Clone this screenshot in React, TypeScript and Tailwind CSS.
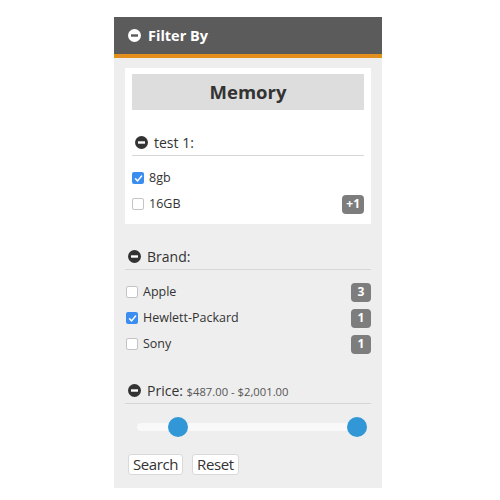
import React from "react";

const font = { fontFamily: '"Open Sans", "Noto Sans", sans-serif' };

function MinusIcon({ dark = true }: { dark?: boolean }) {
  return (
    <svg width="13" height="13" viewBox="0 0 13 13" className="shrink-0">
      <circle cx="6.5" cy="6.5" r="6.5" fill={dark ? "#333333" : "#ffffff"} />
      <rect x="3" y="5.3" width="7" height="2.4" fill={dark ? "#ffffff" : "#5a5a5a"} />
    </svg>
  );
}

function Checkbox({ checked }: { checked?: boolean }) {
  if (checked) {
    return (
      <div className="w-[12px] h-[12px] rounded-[2px] bg-[#3b8ef0] flex items-center justify-center shrink-0">
        <svg width="9" height="9" viewBox="0 0 9 9">
          <path d="M1.5 4.8 L3.6 6.9 L7.6 2" stroke="#fff" strokeWidth="1.5" fill="none" strokeLinecap="round" strokeLinejoin="round" />
        </svg>
      </div>
    );
  }
  return <div className="w-[12px] h-[12px] rounded-[2px] bg-white border border-[#c4c4c4] shrink-0" />;
}

function Badge({ text }: { text: string }) {
  return (
    <div className="h-[19px] min-w-[20px] px-[4px] rounded-[4px] bg-[#7d7d7d] text-white text-[12px] font-bold flex items-center justify-center leading-none">
      {text}
    </div>
  );
}

function Row({ label, checked, badge }: { label: string; checked?: boolean; badge?: string }) {
  return (
    <div className="h-[26px] flex items-center justify-between">
      <div className="flex items-center gap-[5px]">
        <Checkbox checked={checked} />
        <span className="text-[12.5px] text-[#333]">{label}</span>
      </div>
      {badge && <Badge text={badge} />}
    </div>
  );
}

function SectionHeader({ children }: { children: React.ReactNode }) {
  return (
    <div className="h-[27px] flex items-center gap-[6px] pl-[3px] border-b border-[#d6d6d6]">
      <MinusIcon />
      {children}
    </div>
  );
}

export default function App() {
  return (
    <div className="w-[500px] h-[500px] bg-white pt-[17px] pl-[114px]" style={font}>
      <div className="w-[268px] bg-[#eeeeee]">
        <div className="h-[37px] bg-[#5b5b5b] border-b-[4px] border-[#e48e1c] box-content flex items-center pl-[14px] gap-[7px]">
          <MinusIcon dark={false} />
          <span className="text-white font-bold text-[14.5px]">Filter By</span>
        </div>
        <div className="px-[11px] pt-[10px] pb-[13px]">
          <div className="bg-white px-[7px] pt-[6px] pb-[7px]">
            <div className="h-[36px] bg-[#dddddd] flex items-center justify-center text-[18.5px] font-bold text-[#333]">
              Memory
            </div>
            <div className="pt-[19px]">
              <SectionHeader>
                <span className="text-[14px] text-[#333]">test 1:</span>
              </SectionHeader>
            </div>
            <div className="mt-[9px]">
              <Row label="8gb" checked />
              <Row label="16GB" badge="+1" />
            </div>
          </div>

          <div className="mt-[19px]">
            <SectionHeader>
              <span className="text-[14px] text-[#333]">Brand:</span>
            </SectionHeader>
          </div>
          <div className="mt-[9px] pl-[1px]">
            <Row label="Apple" badge="3" />
            <Row label="Hewlett-Packard" checked badge="1" />
            <Row label="Sony" badge="1" />
          </div>

          <div className="mt-[20px]">
            <SectionHeader>
              <span className="text-[14px] text-[#333]">
                Price: <span className="text-[11.25px] text-[#555]">$487.00 - $2,001.00</span>
              </span>
            </SectionHeader>
          </div>

          <div className="mt-[13px] h-[20px] ml-[12px] mr-[11px] relative flex items-center">
            <div className="w-full h-[8px] rounded-full bg-[#f9f9f9]" />
            <div className="absolute left-[31px] top-0 w-[20px] h-[20px] rounded-full bg-[#3197d6]" />
            <div className="absolute left-[210px] top-0 w-[20px] h-[20px] rounded-full bg-[#3197d6]" />
          </div>

          <div className="mt-[17px] flex gap-[9px] pl-[3px]">
            <button className="h-[21px] px-[4px] bg-white border border-[#d9d9d9] rounded-[3px] text-[15px] tracking-[-0.4px] text-[#333] leading-none flex items-center">
              Search
            </button>
            <button className="h-[21px] px-[4px] bg-white border border-[#d9d9d9] rounded-[3px] text-[15px] tracking-[-0.4px] text-[#333] leading-none flex items-center">
              Reset
            </button>
          </div>
        </div>
      </div>
    </div>
  );
}
